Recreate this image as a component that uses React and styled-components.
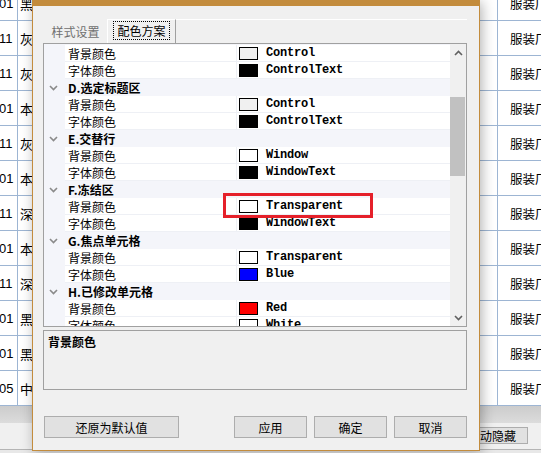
import React from 'react'
import styled, { createGlobalStyle } from 'styled-components'

const GlobalStyle = createGlobalStyle`
  html, body { margin: 0; padding: 0; background: #ffffff; }
  body { font-family: "Noto Sans CJK SC", "Noto Sans", sans-serif; font-size: 12px; color: #000; }
  * { box-sizing: border-box; }
`

const bgRows = [
  ['01', '黑'], ['11', '灰'], ['11', '灰'], ['01', '本'], ['11', '灰'], ['01', '本'],
  ['11', '深'], ['01', '本'], ['11', '深'], ['01', '黑'], ['01', '黑'], ['05', '中'],
]

const groups = [
  { items: [['背景颜色', '#f0f0f0', 'Control'], ['字体颜色', '#000000', 'ControlText']] },
  { title: 'D.选定标题区', items: [['背景颜色', '#f0f0f0', 'Control'], ['字体颜色', '#000000', 'ControlText']] },
  { title: 'E.交替行', items: [['背景颜色', '#ffffff', 'Window'], ['字体颜色', '#000000', 'WindowText']] },
  { title: 'F.冻结区', items: [['背景颜色', '#ffffff', 'Transparent'], ['字体颜色', '#000000', 'WindowText']] },
  { title: 'G.焦点单元格', items: [['背景颜色', '#ffffff', 'Transparent'], ['字体颜色', '#0000ff', 'Blue']] },
  { title: 'H.已修改单元格', items: [['背景颜色', '#ff0000', 'Red'], ['字体颜色', '#ffffff', 'White']] },
]

function Chevron({ dir }) {
  return (
    <svg width="9" height="6" viewBox="0 0 9 6">
      <polyline
        points={dir === 'up' ? '1,5 4.5,1.5 8,5' : '1,1 4.5,4.5 8,1'}
        fill="none"
        stroke={dir === 'down-cat' ? '#8a8a8a' : '#606060'}
        strokeWidth="1.6"
      />
    </svg>
  )
}

export default function App() {
  return (
    <Page>
      <GlobalStyle />
      <BgTable>
        {bgRows.map(([n, c], i) => (
          <BgRow key={i}>
            <NumCell>{n}</NumCell>
            <CharCell>{c}</CharCell>
            <LastCell>服装厂</LastCell>
          </BgRow>
        ))}
      </BgTable>
      <ScrollBand />
      <BottomBar>
        <HideButton>自动隐藏</HideButton>
      </BottomBar>
      <BottomLine />

      <Dialog>
        <TitleBar />
        <Client>
          <TabStrip>
            <Tab>样式设置</Tab>
            <Tab active>
              <FocusText>配色方案</FocusText>
            </Tab>
            <TabFiller />
          </TabStrip>

          <Grid>
            <Rows>
              {groups.map((g, gi) => (
                <React.Fragment key={gi}>
                  {g.title && (
                    <CategoryRow>
                      <Gutter>
                        <Chevron dir="down-cat" />
                      </Gutter>
                      <CategoryLabel>{g.title}</CategoryLabel>
                    </CategoryRow>
                  )}
                  {g.items.map(([name, color, value], ii) => (
                    <ItemRow key={ii}>
                      <Gutter />
                      <NameCell>{name}</NameCell>
                      <ValueCell>
                        <Swatch color={color} />
                        <ValueText>{value}</ValueText>
                      </ValueCell>
                    </ItemRow>
                  ))}
                </React.Fragment>
              ))}
            </Rows>
            <ScrollBar>
              <ArrowButton>
                <Chevron dir="up" />
              </ArrowButton>
              <Track>
                <Thumb />
              </Track>
              <ArrowButton>
                <Chevron dir="down" />
              </ArrowButton>
            </ScrollBar>
          </Grid>

          <DescBox>
            <DescTitle>背景颜色</DescTitle>
          </DescBox>

          <ButtonRow>
            <Button width={135}>还原为默认值</Button>
            <ButtonGroup>
              <Button width={73}>应用</Button>
              <Button width={73}>确定</Button>
              <Button width={73}>取消</Button>
            </ButtonGroup>
          </ButtonRow>
        </Client>
      </Dialog>

      <Highlight />
    </Page>
  )
}

const Page = styled.div`
  position: relative;
  width: 541px;
  height: 453px;
  overflow: hidden;
  background: #ffffff;
`

const BgTable = styled.div`
  margin-top: -14px;
`

const BgRow = styled.div`
  display: flex;
  height: 35px;
  border-bottom: 1px solid #9db5d3;
  font-size: 12px;
  line-height: 35px;
`

const NumCell = styled.div`
  width: 18px;
  border-right: 1px solid #9db5d3;
  font-family: "Liberation Sans", Arial, sans-serif;
  font-size: 13px;
  text-indent: -1px;
  overflow: hidden;
  white-space: nowrap;
`

const CharCell = styled.div`
  width: 480px;
  padding-left: 2px;
  border-right: 1px solid #9db5d3;
  font-size: 13px;
`

const LastCell = styled.div`
  flex: 1;
  padding-left: 12px;
  white-space: nowrap;
  overflow: hidden;
  font-size: 12.5px;
`

const ScrollBand = styled.div`
  height: 17px;
  background: linear-gradient(#cccccc, #dcdcdc);
`

const BottomBar = styled.div`
  height: 26px;
  background: #f0f0f0;
  padding-top: 4px;
`

const HideButton = styled.div`
  margin-left: 456px;
  width: 72px;
  height: 17px;
  border: 1px solid #adadad;
  background: #e1e1e1;
  font-size: 12px;
  line-height: 15px;
  text-align: center;
`

const BottomLine = styled.div`
  height: 4px;
  border-top: 1px solid #b4b4b4;
  background: #e8e8e8;
`

const Dialog = styled.div`
  position: absolute;
  left: 32px;
  top: 0;
  width: 448px;
  height: 451px;
  border: 1px solid #c38c3d;
  border-top: none;
  background: #f0f0f0;
  box-shadow: 2px 2px 12px rgba(0, 0, 0, 0.3);
  display: flex;
  flex-direction: column;
`

const TitleBar = styled.div`
  height: 6px;
  background: #c38c3d;
  flex-shrink: 0;
`

const Client = styled.div`
  flex: 1;
  display: flex;
  flex-direction: column;
  padding: 13px 12px 12px 10px;
`

const TabStrip = styled.div`
  display: flex;
  align-items: flex-end;
  height: 24px;
  flex-shrink: 0;
`

const Tab = styled.div`
  height: ${p => (p.active ? 24 : 22)}px;
  width: ${p => (p.active ? 69 : 63)}px;
  margin-left: ${p => (p.active ? 0 : 1)}px;
  display: flex;
  align-items: center;
  justify-content: center;
  font-size: 12px;
  color: ${p => (p.active ? '#000000' : '#6f6f6f')};
  border-top: ${p => (p.active ? '1px solid #ffffff' : 'none')};
  border-left: ${p => (p.active ? '1px solid #ffffff' : 'none')};
  border-right: ${p => (p.active ? '1px solid #a0a0a0' : 'none')};
  padding-bottom: 2px;
`

const FocusText = styled.span`
  padding: 1px 3px;
  line-height: 15px;
  outline: 1px dotted #000000;
`

const TabFiller = styled.div`
  flex: 1;
  align-self: flex-start;
  border-top: 1px solid #ffffff;
`

const Grid = styled.div`
  height: 284px;
  flex-shrink: 0;
  border: 1px solid #a0a0a0;
  background: #ffffff;
  display: flex;
  overflow: hidden;
`

const Rows = styled.div`
  flex: 1;
  padding-top: 1px;
  overflow: hidden;
  background: #f4f5fa;
`

const CategoryRow = styled.div`
  display: flex;
  align-items: center;
  height: 17px;
  background: #f4f5fa;
`

const Gutter = styled.div`
  width: 21px;
  height: 100%;
  flex-shrink: 0;
  display: flex;
  align-items: center;
  padding-left: 5px;
  background: #f4f5fa;
`

const CategoryLabel = styled.div`
  padding-left: 3px;
  font-weight: bold;
  font-size: 12px;
  line-height: 16px;
`

const ItemRow = styled.div`
  display: flex;
  height: 17px;
`

const NameCell = styled.div`
  width: 172px;
  padding-left: 3px;
  background: #ffffff;
  border-right: 1px solid #eef0f5;
  border-bottom: 1px solid #eef0f5;
  font-size: 12px;
  line-height: 17px;
`

const ValueCell = styled.div`
  flex: 1;
  display: flex;
  align-items: center;
  padding-left: 2px;
  background: #ffffff;
  border-bottom: 1px solid #eef0f5;
`

const Swatch = styled.div`
  width: 19px;
  height: 13px;
  border: 1px solid #000000;
  background: ${p => p.color};
  flex-shrink: 0;
`

const ValueText = styled.span`
  margin-left: 8px;
  font-family: "Liberation Mono", "Courier New", monospace;
  font-weight: bold;
  font-size: 12px;
  letter-spacing: -0.2px;
`

const ScrollBar = styled.div`
  width: 16px;
  flex-shrink: 0;
  background: #f0f0f0;
  display: flex;
  flex-direction: column;
`

const ArrowButton = styled.div`
  height: 17px;
  display: flex;
  align-items: center;
  justify-content: center;
`

const Track = styled.div`
  flex: 1;
  padding: 0 1px 0 0;
`

const Thumb = styled.div`
  margin-top: 36px;
  height: 79px;
  background: #c1c1c1;
`

const DescBox = styled.div`
  margin-top: 3px;
  height: 60px;
  flex-shrink: 0;
  border: 1px solid #a0a0a0;
  padding: 4px 4px;
`

const DescTitle = styled.div`
  font-weight: bold;
  font-size: 12px;
  line-height: 14px;
`

const ButtonRow = styled.div`
  margin-top: 26px;
  display: flex;
  justify-content: space-between;
  padding-left: 1px;
`

const ButtonGroup = styled.div`
  display: flex;
  gap: 7px;
`

const Button = styled.div`
  width: ${p => p.width}px;
  height: 22px;
  border: 1px solid #adadad;
  background: #e1e1e1;
  display: flex;
  align-items: center;
  justify-content: center;
  font-size: 12px;
`

const Highlight = styled.div`
  position: absolute;
  left: 223px;
  top: 193px;
  width: 150px;
  height: 25px;
  border: 3px solid #e5202a;
`
